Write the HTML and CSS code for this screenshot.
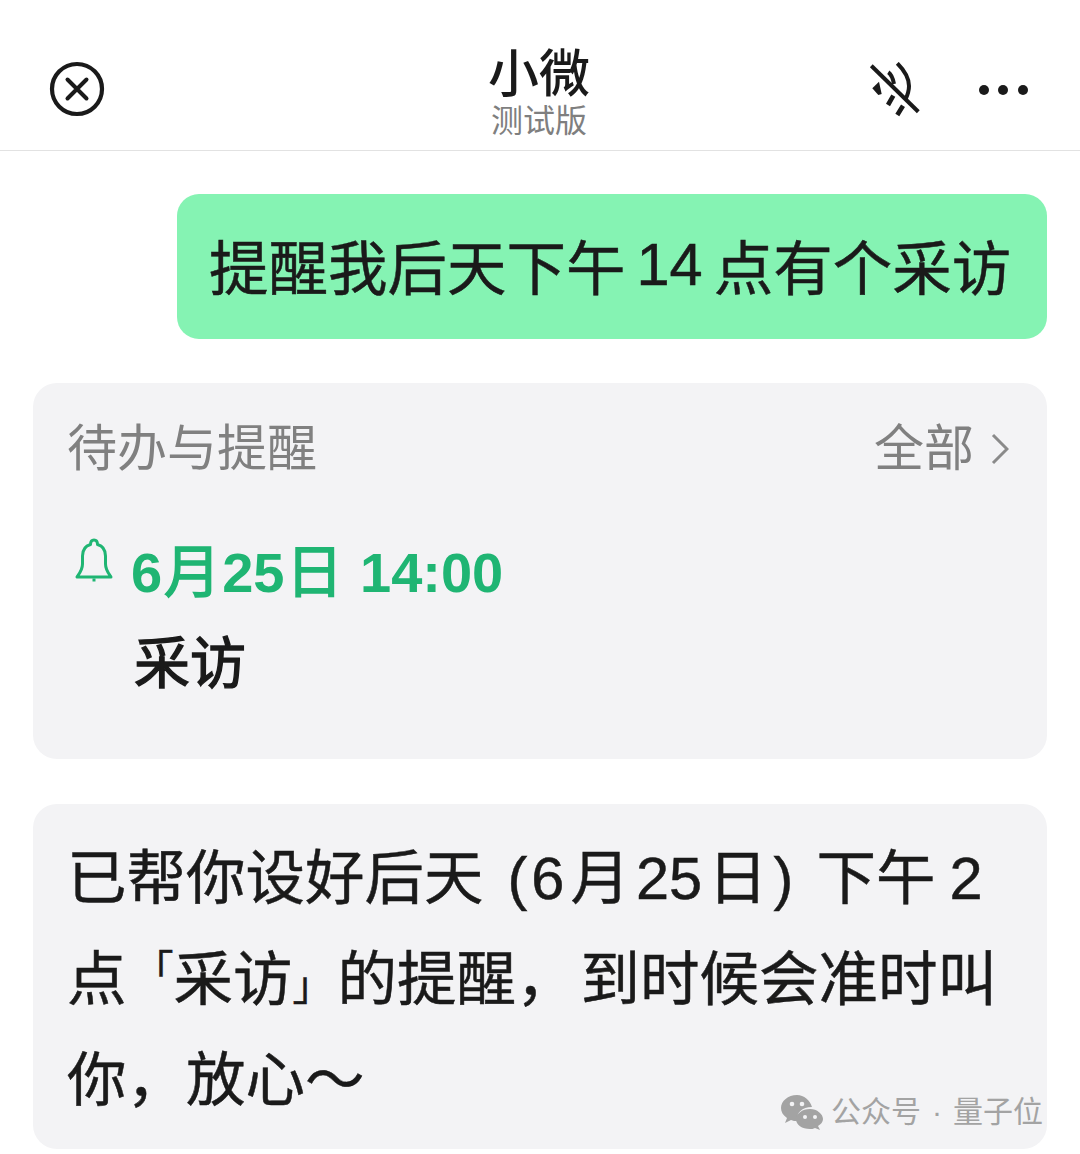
FILE: index.html
```html
<!DOCTYPE html>
<html lang="zh-CN">
<head>
    <meta charset="UTF-8">
    <meta name="viewport" content="width=device-width, initial-scale=1.0">
    <title>小微 测试版</title>
    <link rel="stylesheet" href="styles.css">
</head>
<body>
    <!-- Top bar -->
    <header class="topbar">
        <svg class="icon-close" width="58" height="58" viewBox="0 0 58 58" fill="none" stroke="#1a1a1a" stroke-linecap="round">
            <circle cx="29" cy="29" r="25" stroke-width="4.200"/>
            <path d="M19.500 19.500 L38.500 38.500 M38.500 19.500 L19.500 38.500" stroke-width="4"/>
        </svg>
        <div class="title">
            <div class="title-name">小微</div>
            <div class="title-sub">测试版</div>
        </div>
        <div class="topbar-right">
            <svg class="icon-mute" width="52" height="56" viewBox="0 0 52 56" fill="none" stroke="#1a1a1a">
                <path d="M2.300 3.700 L49.300 49.700" stroke-width="4"/>
                <path d="M28.300 1.300 C36 9 40 16 40 24 C40 29 38.500 33 36.700 37" stroke-width="4"/>
                <path d="M19.300 10.300 C22 12 24 17 25 22" stroke-width="4"/>
                <path d="M3.300 26.300 L10 19.700 L12.700 32 L9.300 33 Z" fill="#1a1a1a" stroke="none"/>
                <path d="M24.300 33.700 L19 43 M34 43.700 L28.300 53" stroke-width="4.600"/>
            </svg>
            <div class="dots"><span></span><span></span><span></span></div>
        </div>
    </header>

    <!-- Messages -->
    <main class="chat">
        <div class="bubble-user">提醒我后天下午<span class="num">14</span>点有个采访</div>

        <section class="card todo">
            <div class="todo-head">
                <span>待办与提醒</span>
                <span class="todo-all">全部
                    <svg width="18" height="32" viewBox="0 0 18 32" fill="none" stroke="#8a8a8a" stroke-width="3"><path d="M2 2 L16 16 L2 30"/></svg>
                </span>
            </div>
            <div class="todo-item">
                <svg class="icon-bell" width="38" height="46" viewBox="0 0 38 46" fill="none" stroke="#1fb573" stroke-width="3" stroke-linejoin="round">
                    <path d="M19 2 C16.500 2 15.500 4 15.500 6.500 C10 8 7.500 12 7.500 18 L7.500 26 C7.500 32 4 36 2 39 L36 39 C34 36 30.500 32 30.500 26 L30.500 18 C30.500 12 28 8 22.500 6.500 C22.500 4 21.500 2 19 2 Z"/>
                    <path d="M17.500 42 L20.500 42"/>
                </svg>
                <div>
                    <div class="todo-time">6<span class="cjk">月</span>25<span class="cjk">日</span> 14:00</div>
                    <div class="todo-text">采访</div>
                </div>
            </div>
        </section>

        <section class="card reply">
            <div>已帮你设好后天<span class="open-paren">(</span>6<span class="date-cjk">月</span>25<span class="date-cjk">日</span><span class="close-paren">)</span>下午<span class="num-two">2</span></div>
            <div>点<span class="open-quote">「</span>采访<span class="close-quote">」</span>的提醒<span class="comma">，</span>到时候会准时叫</div>
            <div>你，放心～</div>
        </section>
    </main>

    <!-- Watermark -->
    <div class="watermark">
        <svg width="42" height="36" viewBox="0 0 42 36" fill="#a3a3a3">
            <path d="M16 1 C7 1 0 7 0 14 C0 18 2 21 6 24 L4 29 L10 26 C12 27 14 27 16 27 C15 19 21 13 31 13 C29 6 23 1 16 1 Z"/>
            <path d="M29 15 C21 15 15 20 15 25 C15 31 21 35 29 35 C31 35 32 35 34 34 L39 36 L37 32 C40 30 42 28 42 25 C42 20 36 15 29 15 Z"/>
            <circle cx="11" cy="10" r="2.300" fill="#f3f3f5"/>
            <circle cx="21" cy="10" r="2.300" fill="#f3f3f5"/>
            <circle cx="24" cy="23" r="2" fill="#f3f3f5"/>
            <circle cx="34" cy="23" r="2" fill="#f3f3f5"/>
        </svg>
        <span>公众号<span class="wm-dot">·</span>量子位</span>
    </div>
</body>
</html>
```

FILE: styles.css
```css
* {
    box-sizing: border-box;
}

body {
    margin: 0;
    height: 1154px;
    overflow: hidden;
    position: relative;
    background-color: #fff;
    color: #1a1a1a;
    font-family: "Liberation Sans", "Noto Sans CJK SC", sans-serif;
}

.topbar {
    height: 151px;
    padding: 32px 52px 0 48px;
    display: flex;
    justify-content: space-between;
    align-items: flex-start;
    position: relative;
    border-bottom: 1px solid #e2e2e2;
}

.icon-close {
    margin-top: 28px;
}

.title {
    position: absolute;
    left: -2px;
    right: 0;
    top: 47px;
    text-align: center;
}

.title-name {
    font-size: 51px;
    line-height: 56px;
    font-weight: 500;
}

.title-sub {
    font-size: 32px;
    line-height: 37px;
    color: #7f7f7f;
}

.topbar-right {
    display: flex;
    align-items: center;
    gap: 58px;
    margin-top: 30px;
}

.dots {
    display: flex;
    gap: 9.700px;
}

.dots span {
    width: 10px;
    height: 10px;
    border-radius: 50%;
    background-color: #1a1a1a;
}

.chat {
    padding: 43px 33px 0;
    display: flex;
    flex-direction: column;
}

.bubble-user {
    align-self: flex-end;
    width: 870px;
    height: 145px;
    padding: 0 0 5px 32px;
    display: flex;
    align-items: center;
    background-color: #85f3b3;
    border-radius: 22px;
    font-size: 59.500px;
    white-space: nowrap;
    -webkit-text-stroke: 0.5px #1a1a1a;
}

.num {
    margin: 0 11px;
}

.card {
    background-color: #f3f3f5;
    border-radius: 24px;
}

.todo {
    height: 376px;
    margin-top: 44px;
    padding: 33px 38px 0 34px;
}

.todo-head {
    display: flex;
    justify-content: space-between;
    align-items: center;
    font-size: 50px;
    line-height: 66px;
    color: #808080;
}

.todo-all {
    display: flex;
    align-items: center;
    gap: 17px;
}

.todo-item {
    display: flex;
    margin-top: 54px;
    margin-left: 8px;
    gap: 18px;
}

.icon-bell {
    margin-top: 2px;
}

.todo-time {
    font-size: 56px;
    line-height: 72px;
    font-weight: 700;
    color: #1fb573;
}

.todo-time .cjk {
    font-size: 57px;
    font-weight: 400;
    margin: 0 1.500px;
    -webkit-text-stroke: 1.500px #1fb573;
}

.todo-text {
    font-size: 56px;
    line-height: 82px;
    margin-top: 14px;
    margin-left: 3px;
    font-weight: 400;
    -webkit-text-stroke: 1.400px #1a1a1a;
}

.reply {
    height: 345px;
    margin-top: 45px;
    padding: 24px 0 0 34px;
    font-size: 59.500px;
    line-height: 101px;
    white-space: nowrap;
    -webkit-text-stroke: 0.5px #1a1a1a;
}

.reply > div {
    height: 101px;
}

.open-paren {
    margin: 0 4px 0 24px;
}

.close-paren {
    margin: 0 23px 0 0;
}

.date-cjk {
    margin: 0 6px;
}

.num-two {
    margin-left: 14px;
}

.open-quote,
.close-quote {
    font-size: 40px;
    line-height: 1;
}

.open-quote {
    vertical-align: 16px;
    margin-left: 7px;
}

.close-quote {
    margin-right: 5px;
}

.comma {
    margin-right: 5px;
}

/* sits on top of the last card */
.watermark {
    position: absolute;
    left: 781px;
    top: 1092px;
    display: flex;
    align-items: center;
    gap: 8px;
    font-size: 30px;
    line-height: 40px;
    color: #a3a3a3;
    white-space: nowrap;
}

.wm-dot {
    margin: 0 11px;
}
```
